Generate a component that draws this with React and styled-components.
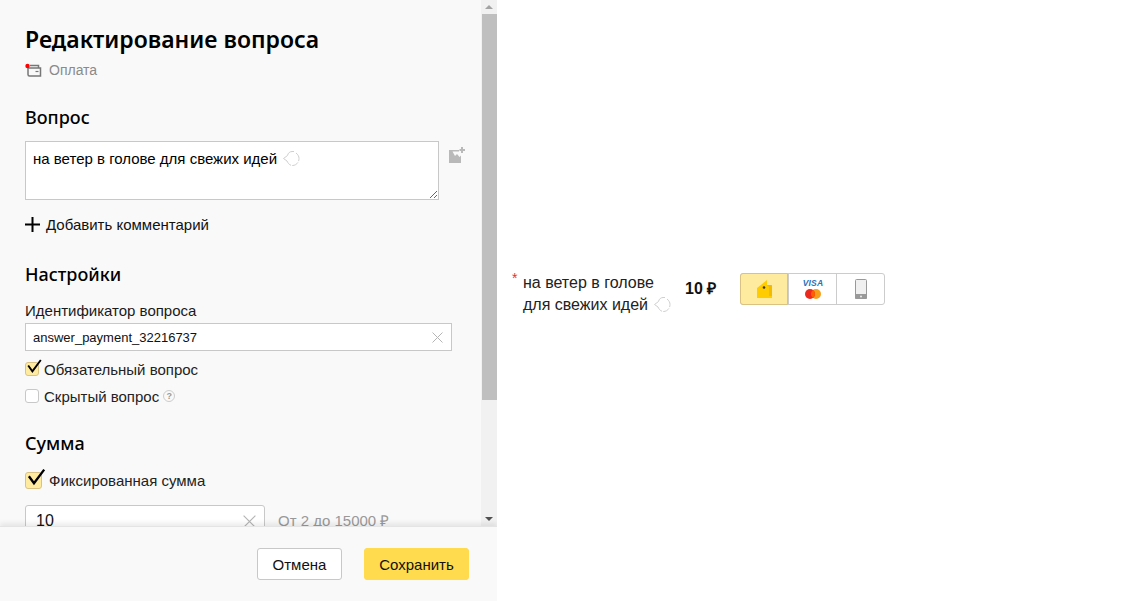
import React from "react";
import styled, { createGlobalStyle } from "styled-components";

const Global = createGlobalStyle`
  html, body { margin: 0; padding: 0; background: #fff; }
  body { font-family: "Liberation Sans", Arial, sans-serif; color: #000; }
  * { box-sizing: border-box; }
`;
const Page = styled.div`display: flex; width: 1145px; height: 601px; overflow: hidden;`;
const Editor = styled.aside`display: flex; flex-direction: column; flex: none; width: 497px; height: 100%; overflow: hidden; background: #f9f9f9;`;
const ScrollArea = styled.div`display: flex; flex: 1; min-height: 0; overflow: hidden;`;
const Content = styled.div`flex: 1; min-width: 0; padding: 24px 0 0 25px;`;
const Title = styled.h1`margin: 0; font: 600 23px/30px "Noto Sans", sans-serif; color: #000;`;
const Kind = styled.div`display: flex; align-items: center; gap: 7px; height: 20px; margin-top: 6px; font-size: 14px; color: #8a8a8a;`;
const Section = styled.h2`margin: ${p => p.$top}px 0 0; font: 500 18px/24px "Noto Sans", sans-serif; color: #000;`;
const QuestionRow = styled.div`display: flex; gap: 10px; margin-top: 12px;`;
const QuestionBox = styled.div`
  width: 414px; height: 59px; padding: 8px 7px; background: #fff; border: 1px solid #c8c8c8;
  font-size: 15px; line-height: 18px; resize: vertical; overflow: hidden;
`;
const AddComment = styled.div`display: flex; align-items: center; gap: 6px; height: 20px; margin-top: 14px; font-size: 15px; color: #111;`;
const FieldLabel = styled.div`margin-top: 16px; font-size: 15px; line-height: 18px; color: #1a1a1a;`;
const Field = styled.div`
  display: flex; align-items: center; width: 427px; height: 28px; margin-top: 3px; padding: 0 8px 0 7px;
  background: #fff; border: 1px solid #c8c8c8;
`;
const FieldInput = styled.input`
  flex: 1; min-width: 0; border: 0; padding: 0; outline: 0; background: transparent;
  font: 13px "Liberation Sans", sans-serif; color: #111;
`;
const CheckRow = styled.label`display: flex; align-items: center; gap: ${p => p.$gap}px; height: 18px; margin-top: ${p => p.$top}px; font-size: 15px; color: #222;`;
const Box = styled.span`
  position: relative; flex: none; width: ${p => p.$size}px; height: ${p => p.$size}px; border-radius: 3px;
  background: ${p => (p.$on ? "#ffeba0" : "#fff")};
  border: 1px solid ${p => (p.$on ? "#d9c282" : "#c8c8c8")};
`;
const Tick = styled.svg`position: absolute; left: -1px; top: -1px; overflow: visible;`;
const Hint = styled.span`
  display: inline-flex; align-items: center; justify-content: center; width: 12px; height: 12px; margin-left: -1px;
  border-radius: 50%; border: 1px solid #ccc; font-size: 9px; font-weight: 700; color: #999;
`;
const AmountRow = styled.div`display: flex; gap: 13px; margin-top: 16px;`;
const AmountField = styled.div`
  display: flex; align-items: center; flex: none; width: 240px; height: 32px; padding: 0 8px 0 10px;
  background: #fff; border: 1px solid #c8c8c8; border-radius: 3px;
`;
const AmountInput = styled.input`
  flex: 1; min-width: 0; border: 0; padding: 0; outline: 0; background: transparent;
  font: 16px "Liberation Sans", sans-serif; color: #111;
`;
const Range = styled.span`line-height: 32px; font-size: 15px; color: #999;`;
const Scrollbar = styled.div`display: flex; flex-direction: column; align-items: center; flex: none; width: 16px; background: #f1f1f1;`;
const Arrow = styled.div`
  flex: none; width: 0; height: 0; margin: 5px 0;
  border-left: 4px solid transparent; border-right: 4px solid transparent;
  ${p => (p.$down ? "border-top: 4px solid #505050;" : "border-bottom: 4px solid #a3a3a3;")}
`;
const Thumb = styled.div`flex: none; width: 15px; height: 386px; background: #bfbfbf;`;
const ScrollGap = styled.div`flex: 1;`;
const Footer = styled.footer`
  position: relative; flex: none; display: flex; align-items: center; justify-content: flex-end; gap: 22px;
  height: 75px; padding: 0 28px 0 0; background: #f9f9f9; border-top: 1px solid #e4e4e4;
  box-shadow: 0 -3px 5px rgba(0, 0, 0, 0.08);
`;
const Button = styled.button`
  height: 32px; padding: 0; width: ${p => p.$w}px; border-radius: 3px; font: 15px "Liberation Sans", sans-serif; color: #111;
  background: ${p => (p.$primary ? "#ffdb4d" : "#fff")};
  border: 1px solid ${p => (p.$primary ? "#ffdb4d" : "#c8c8c8")};
`;
const Preview = styled.main`flex: 1; display: flex; align-items: flex-start; padding: 273px 0 0 15px;`;
const Star = styled.span`width: 11px; margin-top: -2px; color: #e3342f; font-size: 14px; line-height: 14px;`;
const QuestionText = styled.div`width: 162px; margin-top: -1px; font-size: 16px; line-height: 22px; color: #222;`;
const Price = styled.div`width: 55px; font-size: 16px; font-weight: 700; line-height: 32px; color: #111;`;
const Tabs = styled.div`display: flex; height: 32px; border: 1px solid #ccc; border-radius: 3px; background: #fff;`;
const Tab = styled.div`
  display: flex; align-items: center; justify-content: center; width: 48px;
  & + & { border-left: 1px solid #ccc; }
  ${p => p.$on && "background: #ffeba0; margin: -1px 0 -1px -1px; height: 32px; border: 1px solid #d9c282; border-radius: 3px 0 0 3px;"}
`;
const Card = styled.div`display: flex; flex-direction: column; align-items: center; gap: 1px; margin: -1px 0 0 1px;`;
const VisaMark = styled.span`font: italic 700 8.5px/10px "Liberation Sans", sans-serif; color: #2a72b5; letter-spacing: 0.2px;`;
const Bird = styled.svg`vertical-align: -3px; margin-left: 6px;`;

const BirdIcon = () => (
  <Bird width="17" height="17" viewBox="0 0 17 17" fill="none" stroke="#cfcfcf" strokeWidth="1">
    <path d="M.5 8.500L4.500 5.500" />
    <path d="M.5 8.500L4 11" />
    <path d="M4.500 5.500C5 3 7 1.500 9 1.500h2" />
    <path d="M13 3c2 1.500 3 3.500 3 5.500 0 4-3 7-6.500 7C7 15.500 5 13.500 4 11" strokeDasharray="9 1.500 7 1" />
  </Bird>
);
const Cross = ({ size = 11 }) => (
  <svg width={size} height={size} viewBox="0 0 11 11" stroke="#b5b5b5" strokeWidth="1" fill="none">
    <path d="M.5.5l10 10M10.5.5l-10 10" />
  </svg>
);
const Check = ({ w }) => (
  <Tick width={w} height={w} viewBox="0 0 14 14" fill="none" stroke="#000" strokeWidth="1.900">
    <path d="M3.200 3.500L7.400 9.300 15.800 -2" />
  </Tick>
);
const WalletSmall = () => (
  <svg width="17" height="14" viewBox="0 0 17 14" fill="none">
    <path d="M3 5h12.500v8H4.500A1.500 1.500 0 0 1 3 11.500zM5 2.500h8.500V5" stroke="#777" strokeWidth="1.500" />
    <path d="M10.500 8.500h3" stroke="#777" strokeWidth="1.200" />
    <circle cx="2.500" cy="3" r="2.200" fill="#f00" />
  </svg>
);
const ImagePlus = () => (
  <svg width="16" height="16" viewBox="0 0 16 16" style={{ marginTop: 6, flex: "none" }}>
    <path d="M0 3h12v13H0z" fill="#b9b9b9" />
    <path d="M3.500 4.500L6 9l2-2 2.500 3 1.500-1.500V4.500z" fill="#f9f9f9" />
    <path d="M10 3h6M13 0v6" stroke="#f9f9f9" strokeWidth="4" />
    <path d="M10.500 3h5.500M13 0v6" stroke="#b9b9b9" strokeWidth="2" />
  </svg>
);
const Plus = () => (
  <svg width="15" height="15" viewBox="0 0 15 15"><path d="M7.500 0v15M0 7.500h15" stroke="#000" strokeWidth="2" /></svg>
);
const Wallet = () => (
  <svg width="15" height="18" viewBox="0 0 15 18">
    <path d="M0 8L10 0V5h4a1 1 0 0 1 1 1V18H0z" fill="#fc0" />
    <path d="M10 5h4a1 1 0 0 1 1 1v10h-3V7z" fill="#f2bb00" />
    <circle cx="7" cy="7.500" r="1.300" fill="#333" />
  </svg>
);
const Master = () => (
  <svg width="16" height="10" viewBox="0 0 16 10">
    <circle cx="11" cy="5" r="5" fill="#f79e1b" />
    <circle cx="5" cy="5" r="5" fill="#eb2a1d" />
    <path d="M8 1a5 5 0 0 1 0 8 5 5 0 0 1 0-8z" fill="#ff5f00" />
  </svg>
);
const Phone = () => (
  <svg width="12" height="20" viewBox="0 0 12 20">
    <rect x=".5" y=".5" width="11" height="19" rx="1" fill="#f0f0f0" stroke="#999" />
    <path d="M0 15h12v4a1 1 0 0 1-1 1H1a1 1 0 0 1-1-1z" fill="#999" />
    <circle cx="6" cy="17.500" r="1" fill="#eee" />
  </svg>
);

export default function App() {
  return (
    <Page>
      <Global />
      <Editor>
        <ScrollArea>
          <Content>
            <Title>Редактирование вопроса</Title>
            <Kind><WalletSmall />Оплата</Kind>
            <Section $top={25}>Вопрос</Section>
            <QuestionRow>
              <QuestionBox>на ветер в голове для свежих идей<BirdIcon /></QuestionBox>
              <ImagePlus />
            </QuestionRow>
            <AddComment><Plus />Добавить комментарий</AddComment>
            <Section $top={28}>Настройки</Section>
            <FieldLabel>Идентификатор вопроса</FieldLabel>
            <Field>
              <FieldInput readOnly defaultValue="answer_payment_32216737" />
              <Cross />
            </Field>
            <CheckRow $gap={5} $top={9}><Box $size={14} $on><Check w={14} /></Box>Обязательный вопрос</CheckRow>
            <CheckRow $gap={5} $top={9}><Box $size={14} />Скрытый вопрос<Hint>?</Hint></CheckRow>
            <Section $top={26}>Сумма</Section>
            <CheckRow $gap={7} $top={16}><Box $size={17} $on><Check w={17} /></Box>Фиксированная сумма</CheckRow>
            <AmountRow>
              <AmountField>
                <AmountInput readOnly defaultValue="10" />
                <Cross size={13} />
              </AmountField>
              <Range>От 2 до 15000 ₽</Range>
            </AmountRow>
          </Content>
          <Scrollbar>
            <Arrow />
            <Thumb />
            <ScrollGap />
            <Arrow $down />
          </Scrollbar>
        </ScrollArea>
        <Footer>
          <Button $w={85}>Отмена</Button>
          <Button $primary $w={105}>Сохранить</Button>
        </Footer>
      </Editor>
      <Preview>
        <Star>*</Star>
        <QuestionText>на ветер в голове<br />для свежих идей<BirdIcon /></QuestionText>
        <Price>10 ₽</Price>
        <Tabs>
          <Tab $on><Wallet /></Tab>
          <Tab><Card><VisaMark>VISA</VisaMark><Master /></Card></Tab>
          <Tab><Phone /></Tab>
        </Tabs>
      </Preview>
    </Page>
  );
}
